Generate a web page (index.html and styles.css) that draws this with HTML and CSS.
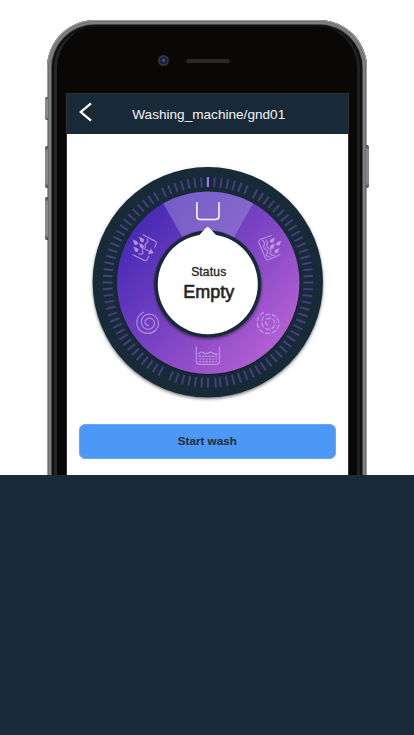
FILE: index.html
```html
<!DOCTYPE html>
<html lang="en">
<head>
<meta charset="utf-8">
<title>Washing machine</title>
<link rel="stylesheet" href="styles.css">
</head>
<body>
<main class="stage">
  <div class="phone">
    <i class="key key-mute"></i><i class="key key-up"></i><i class="key key-down"></i><i class="key key-power"></i>
    <div class="bezel">
      <i class="camera"></i><i class="speaker"></i>
      <section class="screen">
        <header class="bar">
          <svg class="back" width="14" height="20" viewBox="0 0 14 20"><path d="M12 1.300 1.800 10 12 18.700"/></svg>
          <h1 class="title">Washing_machine/gnd01</h1>
        </header>
        <div class="content">
          <div class="dial">
            <svg class="dial-art" width="240" height="240" viewBox="88 162 240 240">
              <defs>
                <linearGradient id="ring" x1="0.1" y1="0.2" x2="0.85" y2="0.85">
                  <stop offset="0" stop-color="#482bb4"/><stop offset=".5" stop-color="#7a43c3"/><stop offset="1" stop-color="#b25ed2"/>
                </linearGradient>
                <filter id="soft" x="-10%" y="-10%" width="120%" height="120%"><feDropShadow dx="0" dy="1.500" stdDeviation="1.500" flood-color="#000" flood-opacity=".5"/></filter>
                <path id="drop" d="M-2.600-2.900C-.6-2 2.600-1.300 2.600.6A1.900 1.900 0 0 1-1.100 1.200C-1.400 0-2.100-1.500-2.600-2.900Z"/>
              </defs>
              <circle class="navy" cx="207.8" cy="282.2" r="115.2" filter="url(#soft)"/>
              <g id="ticks" class="ticks"></g>
              <path class="tick-on" d="M207.900 177v10"/>
              <circle cx="208.2" cy="283.200" r="92" fill="#101d2b" opacity=".6"/>
              <circle cx="208.2" cy="282.7" r="91.3" fill="url(#ring)"/>
              <path class="wedge" d="M208.200 282.700 163.200 203.300A91.300 91.300 0 0 1 253.200 203.300Z"/>
              <circle class="navy" cx="207.8" cy="284.1" r="53.500" filter="url(#soft)"/>
              <circle cx="207.8" cy="284.200" r="50" fill="#fff"/>
              <path d="M198.500 236 205.800 228Q207.600 226 209.400 228L217 236Z" fill="#fff"/>
              <path class="line on" d="M196.900 202.800V216.300Q196.900 219.400 200 219.400H215.900Q219 219.400 219 216.300V202.800"/>
              <g class="line">
                <path d="M196.400 346.800V361Q196.400 364.300 199.700 364.300H216.200Q219.500 364.300 219.500 361V346.800"/>
                <path d="M198.500 354Q201 350.800 203.300 352.700T208 353T212.700 353T217.500 354"/>
                <path stroke-dasharray="2.300 1" stroke-linecap="butt" d="M198.500 356.300H217.500M199.500 359H217.500M199 361.700H217"/>
              </g>
              <g class="line">
                <path d="M143 234.800 155 241.100Q156.800 242.300 156.100 244.200L154.700 247.200M133 254.800 144.200 260.400Q146.200 261.200 147.300 259.300L148.600 256.600"/>
                <path d="M147.500 239.500Q148.500 242 146.500 243.200T145.300 246.700Q145.500 248.500 143.500 248.500T142.800 251.500T138.800 254"/>
                <path d="M145.300 249.500 150 251.500"/><path class="fill" d="M150.900 248.600 153.700 253 148 254.500Z"/>
                <g class="fill"><use href="#drop" x="135.300" y="242.500"/><use href="#drop" x="141.500" y="239.700"/><use href="#drop" x="136" y="249.500"/><use href="#drop" x="141.300" y="245.800"/></g>
              </g>
              <g class="line">
                <path d="M271.300 235.500 260.700 239.200Q258.200 240.300 259 242.800L265.300 257.800Q266.400 260.500 269.100 259.500L279.800 254.800"/>
                <path d="M263 240.500Q265.300 243 264 245.500T266 249.500T267 253.500T270.500 257M266 240Q268 242.500 267 244.700T269 248.500T270.500 252.500T274.500 255.300"/>
                <g class="fill"><use href="#drop" transform="translate(272.500 240.300) scale(-1 1)"/><use href="#drop" transform="translate(278.800 243.300) scale(-1 1)"/><use href="#drop" transform="translate(272.500 246.500) scale(-1 1)"/><use href="#drop" transform="translate(277 250.800) scale(-1 1)"/></g>
              </g>
              <path class="line" d="M143.500 312.300C138 314.500 136.300 320 137.100 324.800C138 330.500 143 333.700 148.300 333.400C154.500 333 158.600 328.300 158.500 323C158.400 317.700 154 314.300 149.300 314.200C144.500 314.100 141.200 317.800 141.300 322C141.400 326.500 144.500 329.300 148.400 329.300C152 329.200 154.500 326.500 154.400 323.200C154.300 320 151.800 318 149 318.200C146.300 318.500 144.800 320.500 145.100 322.700C145.400 324.700 147 325.600 148.600 325.300"/>
              <path class="line dashed" transform="translate(120.500 0)" d="M143.500 312.300C138 314.500 136.300 320 137.100 324.800C138 330.500 143 333.700 148.300 333.400C154.500 333 158.600 328.300 158.500 323C158.400 317.700 154 314.300 149.300 314.200C144.500 314.100 141.200 317.800 141.300 322C141.400 326.500 144.500 329.300 148.400 329.300C152 329.200 154.500 326.500 154.400 323.200C154.300 320 151.800 318 149 318.200C146.300 318.500 144.800 320.500 145.100 322.700C145.400 324.700 147 325.600 148.600 325.300"/>
            </svg>
            <div class="readout"><span class="label">Status</span><strong class="value">Empty</strong></div>
          </div>
          <button class="start" type="button">Start wash</button>
        </div>
      </section>
    </div>
  </div>
</main>
<script src="ticks.js"></script>
</body>
</html>
```
FILE: ticks.js
```js
const angles = [180, 175.7];
for (let i = 1; i < 7; i++) angles.push(i * 3.7);
for (let i = 0; i <= 17; i++) angles.push(28 + i * 62 / 17);
for (let i = 1; i < 8; i++) angles.push(-i * 3.72);
for (let i = 0; i <= 16; i++) angles.push(-31 - i * 59 / 16);
for (let i = 0; i < 22; i++) angles.push(173 - i * 83 / 22);
for (let i = 1; i < 7; i++) angles.push(180 + i * 3.6);
for (let i = 0; i < 17; i++) angles.push(208 + i * 62 / 17);
const group = document.getElementById('ticks');
for (const angle of angles) {
  const tick = document.createElementNS('http://www.w3.org/2000/svg', 'path');
  tick.setAttribute('d', 'M208 177.200v9.800');
  tick.setAttribute('transform', `rotate(${angle} 208 282.500)`);
  group.appendChild(tick);
}
```
FILE: styles.css
```css
* { box-sizing: border-box; }
body { margin: 0; background: #182938; font-family: "Liberation Sans", Arial, sans-serif; }
.stage { height: 475px; padding: 20px 47px 0; background: #fff; overflow: hidden; }
.phone {
  position: relative; width: 320px; height: 650px; padding: 5px 5px 0; border-radius: 48px;
  background: #7b7d81;
  box-shadow: inset 0 0 0 1px #a0a0a3, inset 0 0 0 2px #6b6d70, inset 0 0 0 4px #7e8084, inset 0 0 0 5px #444548;
}
.bezel {
  position: relative; height: 640px; padding: 68.500px 14.500px 0; border-radius: 43px;
  background: #090807;
  box-shadow: inset 0 0 0 2px #111, inset 5px 0 0 #252525, inset -5px 0 0 #202020;
}
.camera {
  position: absolute; left: 106px; top: 30px; width: 11px; height: 11px; border-radius: 50%;
  background: radial-gradient(circle, #3c55b0 0 8%, #1d285c 25%, #171b2a 45%, #39393b 55%, #202020);
}
.speaker { position: absolute; left: 134px; top: 34px; width: 44px; height: 4px; border-radius: 2px; background: #292827; }
.key { position: absolute; width: 3px; border-radius: 2px 0 0 2px; background: linear-gradient(#444, #88898e 12%, #88898e 88%, #444); }
.key-mute { left: -2px; top: 77px; height: 23px; }
.key-up { left: -2px; top: 126px; height: 42px; }
.key-down { left: -2px; top: 177px; height: 43px; }
.key-power { left: 319px; top: 125px; height: 43px; border-radius: 0 2px 2px 0; }
.screen { width: 281.500px; height: 500px; background: #fff; box-shadow: 0 0 0 1px #303030; }
.bar { display: flex; align-items: center; height: 40.500px; background: #182938; color: #f4f6f8; position: relative; }
.back { position: absolute; left: 12px; top: 8.500px; fill: none; stroke: #fff; stroke-width: 2.300; }
.title { flex: 1; margin: 0; text-align: center; font-size: 13.600px; font-weight: 400; padding: 1px 0 0 3px; white-space: nowrap; }
.content { padding: 28px 12.500px 0; display: flex; flex-direction: column; align-items: center; }
.dial { display: grid; width: 240px; height: 240px; margin-left: 1px; }
.dial > * { grid-area: 1 / 1; }
.dial-art { display: block; }
.readout { z-index: 1; display: flex; flex-direction: column; align-items: center; padding: 102px 0 0 2px; color: #252525; }
.label { font-size: 12px; line-height: 16px; -webkit-text-stroke: .35px #252525; letter-spacing: .2px; }
.value { font-size: 18px; line-height: 24px; font-weight: 400; -webkit-text-stroke: .6px #252525; }
.navy { fill: #182938; }
.ticks { stroke: #463f7a; stroke-width: 2; }
.tick-on { stroke: #a56ff0; stroke-width: 2.200; }
.wedge { fill: #9b90d8; fill-opacity: .5; }
.line { fill: none; stroke: #cda9ee; stroke-opacity: .72; stroke-width: 1.200; stroke-linecap: round; }
.dashed { stroke-dasharray: 5 1.700; stroke-linecap: butt; stroke-width: 1.400; }
.on { stroke: #fff; stroke-opacity: 1; stroke-width: 1.500; }
.fill { fill: #cda9ee; fill-opacity: .8; stroke: none; }
.start {
  width: 256.500px; height: 35px; margin-top: 21.500px; padding: 0 0 2px; border: 1px solid #68aafa; border-radius: 6px;
  background: #4b98f7; color: #222b35; font: 700 11.700px "Liberation Sans", Arial, sans-serif;
}
```
